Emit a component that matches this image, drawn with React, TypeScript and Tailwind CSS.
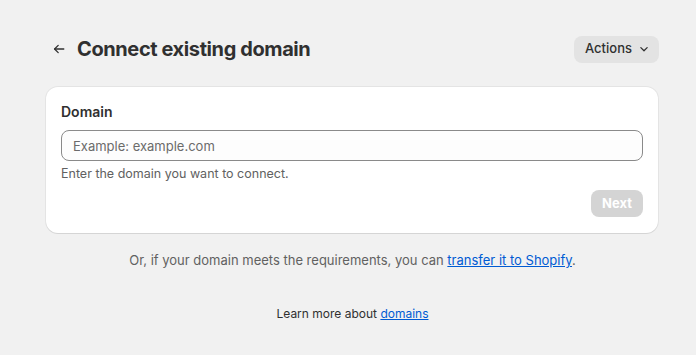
import React from 'react'

const ArrowLeft = () => (
  <svg width="16" height="16" viewBox="0 0 20 20" fill="none" stroke="#303030" strokeWidth="1.6" strokeLinecap="round" strokeLinejoin="round">
    <path d="M16 10H4.5" />
    <path d="M9 5.5 4.5 10 9 14.5" />
  </svg>
)

const ChevronDown = () => (
  <svg width="14" height="14" viewBox="0 0 20 20" fill="none" stroke="#303030" strokeWidth="1.8" strokeLinecap="round" strokeLinejoin="round">
    <path d="M5.5 8 10 12.5 14.5 8" />
  </svg>
)

const App = () => {
  return (
    <div className="min-h-[355px] bg-[#f1f1f1] pl-[46px] pr-[37px] pt-[34px] font-['Inter','Noto_Sans',sans-serif] text-[#303030]">
      <div className="flex items-center justify-between">
        <div className="flex items-center gap-[10px] pl-[5px]">
          <ArrowLeft />
          <h1 className="text-[20px] font-bold tracking-[-0.4px]">Connect existing domain</h1>
        </div>
        <button className="flex h-[27px] items-center gap-[5px] rounded-lg bg-[#e3e3e3] pl-[11px] pr-[8px] text-[13px] font-medium">
          Actions
          <ChevronDown />
        </button>
      </div>

      <div className="mt-[23px] w-[612px] rounded-xl bg-white px-[15px] pb-[16px] pt-[15px] shadow-[0_1px_0_rgba(26,26,26,0.07),0_0_0_1px_rgba(0,0,0,0.05)]">
        <label className="block text-[14px] font-semibold leading-[20px]">Domain</label>
        <input
          className="mt-[8px] h-[31px] w-full rounded-lg border border-[#8a8a8a] bg-[#fdfdfd] px-[11px] text-[13px] outline-none placeholder:text-[#6b6b6b]"
          placeholder="Example: example.com"
        />
        <p className="mt-[4px] text-[12.5px] leading-[18px] text-[#616161]">Enter the domain you want to connect.</p>
        <div className="mt-[7px] flex justify-end">
          <button className="h-[27px] rounded-lg bg-[#d4d4d4] px-[11px] text-[13px] font-bold text-white">Next</button>
        </div>
      </div>

      <p className="mt-[18px] text-center text-[13px] text-[#616161]">
        Or, if your domain meets the requirements, you can{' '}
        <a className="text-[#005bd3] underline" href="#">transfer it to Shopify</a>.
      </p>

      <p className="mt-[34px] text-center text-[12px] text-[#303030]">
        Learn more about{' '}
        <a className="text-[#005bd3] underline" href="#">domains</a>
      </p>
    </div>
  )
}

export default App
